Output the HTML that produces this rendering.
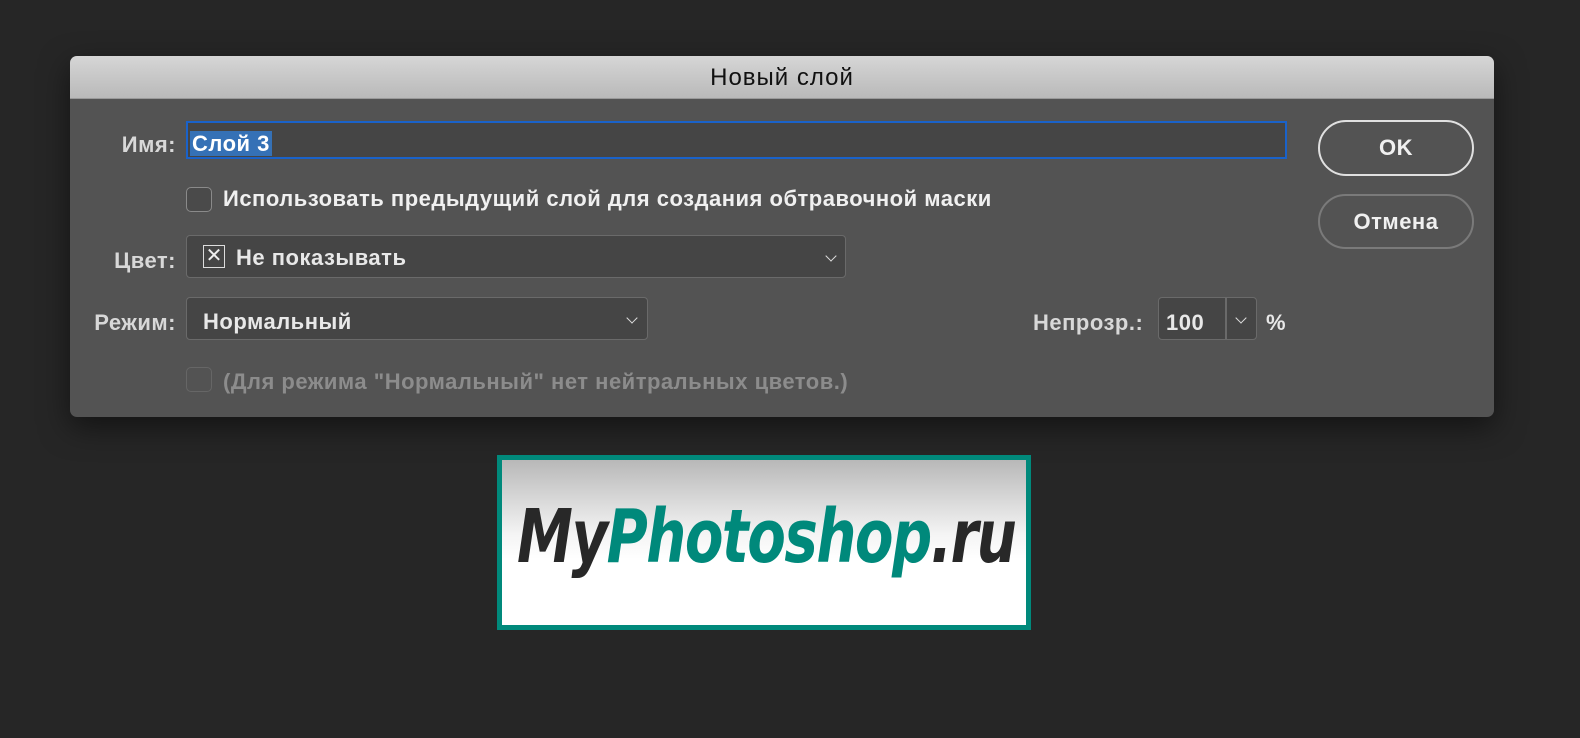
<!DOCTYPE html>
<html><head><meta charset="utf-8"><style>
*{box-sizing:border-box;margin:0;padding:0}
body{width:1580px;height:738px;background:#262626;position:relative;overflow:hidden;font-family:"Liberation Sans",sans-serif;color:#e8e8e8}
.dlg{position:absolute;left:70px;top:56px;width:1424px;height:361px;background:#535353;border-radius:7px;overflow:hidden;box-shadow:0 10px 30px rgba(0,0,0,.5)}
.tb{height:43px;background:linear-gradient(#d6d6d6,#b9b9b9);border-bottom:1px solid #999;text-align:center;font-size:24px;letter-spacing:1px;line-height:44px;color:#111}
.a{position:absolute;font-size:22px;font-weight:bold;letter-spacing:.5px}
.lbl{position:absolute;font-size:22px;font-weight:bold;letter-spacing:.5px;color:#d8d8d8;text-align:right;width:140px}
.box{position:absolute;background:#454545;border:1.5px solid #6a6a6a;border-radius:4px}
.cb{position:absolute;width:26px;height:25px;border:1.5px solid #8a8a8a;border-radius:5px;background:#4a4a4a}
.btn{position:absolute;left:1248px;width:156px;border-radius:28px;text-align:center;font-size:22px;font-weight:bold;letter-spacing:.5px}
.chev{position:absolute;width:8px;height:8px;border-right:1.5px solid #ddd;border-bottom:1.5px solid #ddd;transform:rotate(45deg)}
</style></head><body>
<div class="dlg">
<div class="tb">Новый слой</div>
<div class="lbl" style="left:-34px;top:76px">Имя:</div>
<div class="box" style="left:116px;top:65px;width:1101px;height:38px;border:2px solid #1a62c9;border-radius:0"></div>
<div class="a" style="left:120px;top:75px;background:#3571b6;color:#fff;padding:0 2px;line-height:25px">Слой 3</div>
<div class="cb" style="left:116px;top:131px"></div>
<div class="a" style="left:153px;top:130px;color:#f0f0f0">Использовать предыдущий слой для создания обтравочной маски</div>
<div class="lbl" style="left:-34px;top:192px">Цвет:</div>
<div class="box" style="left:116px;top:179px;width:660px;height:43px"></div>
<div style="position:absolute;left:133px;top:189px;width:22px;height:23px;border:1.5px solid #ddd;font-size:20px;line-height:20px;text-align:center;color:#eee">✕</div>
<div class="a" style="left:166px;top:189px">Не показывать</div>
<div class="chev" style="left:757px;top:196px"></div>
<div class="lbl" style="left:-34px;top:254px">Режим:</div>
<div class="box" style="left:116px;top:241px;width:462px;height:43px"></div>
<div class="a" style="left:133px;top:253px">Нормальный</div>
<div class="chev" style="left:558px;top:258px"></div>
<div class="a" style="left:963px;top:254px;color:#d8d8d8">Непрозр.:</div>
<div class="box" style="left:1088px;top:241px;width:99px;height:43px"></div>
<div style="position:absolute;left:1155px;top:242px;width:1.5px;height:41px;background:#6a6a6a"></div>
<div class="a" style="left:1096px;top:254px">100</div>
<div class="chev" style="left:1167px;top:258px"></div>
<div class="a" style="left:1196px;top:254px">%</div>
<div class="cb" style="left:116px;top:311px;border-color:#666;background:#535353"></div>
<div class="a" style="left:153px;top:313px;color:#8c8c8c">(Для режима "Нормальный" нет нейтральных цветов.)</div>
<div class="btn" style="top:64px;height:56px;border:2px solid #e0e0e0;line-height:52px;color:#f0f0f0">OK</div>
<div class="btn" style="top:138px;height:55px;border:2px solid #7a7a7a;line-height:51px;color:#f0f0f0">Отмена</div>
</div>
<div style="position:absolute;left:497px;top:455px;width:534px;height:175px;border:5px solid #00897b;background:linear-gradient(#b8b8b8,#f4f4f4 45%,#fff 60%)"></div>
<div style="position:absolute;left:517px;top:492px;font-size:74px;font-weight:bold;font-style:italic;letter-spacing:-2px;color:#282828;line-height:90px;font-family:'DejaVu Sans','Liberation Sans',sans-serif;transform:scaleX(.76);transform-origin:left">My<span style="color:#00897b">Photoshop</span>.ru</div>
</body></html>
